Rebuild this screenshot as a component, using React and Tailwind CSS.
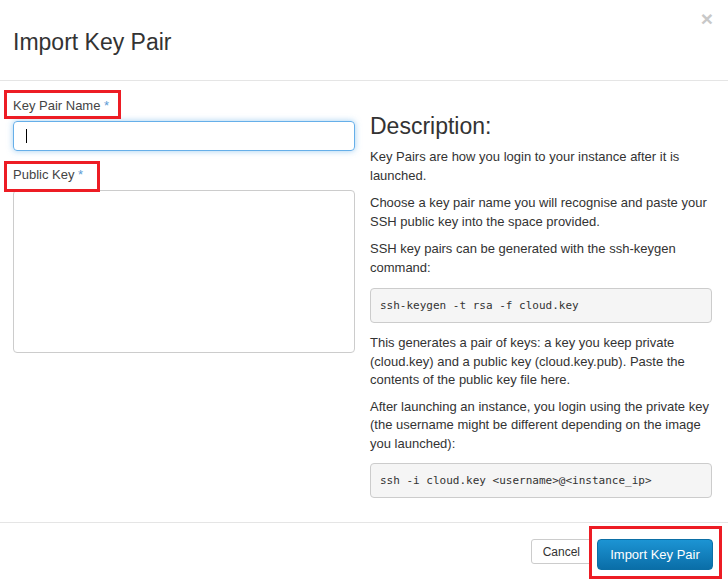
export default function App() {
  return (
    <div className="relative w-[728px] h-[579px] bg-white flex flex-col font-['Liberation_Sans',Arial,sans-serif] text-[#333] overflow-hidden">
      {/* header */}
      <div className="h-[81px] border-b border-[#e5e5e5] flex justify-between pl-[13px] pr-[15px]">
        <h3 className="mt-[29px] text-[23px] leading-[26px] font-normal text-[#333]">Import Key Pair</h3>
        <span className="mt-[6px] text-[21px] leading-[26px] font-bold text-[#c8c8c8]">×</span>
      </div>

      {/* body */}
      <div className="flex-1 flex px-[13px] pt-[15px]">
        <div className="w-[342px] flex flex-col">
          <label className="text-[13px] leading-[19px] text-[#444] mb-[6px]">
            Key Pair Name <span className="text-[#5b9bd5]">*</span>
          </label>
          <div className="h-[30px] rounded-[4px] border border-[#66afe9] shadow-[0_0_6px_rgba(102,175,233,0.6)] flex items-center pl-[12px]">
            <div className="w-px h-[14px] bg-black" />
          </div>
          <label className="mt-[14px] text-[13px] leading-[19px] text-[#444] mb-[6px]">
            Public Key <span className="text-[#5b9bd5]">*</span>
          </label>
          <div className="h-[163px] rounded-[4px] border border-[#ccc]" />
        </div>

        <div className="w-[342px] ml-[15px] text-[13px] leading-[19px] text-[#333]">
          <h3 className="mt-[17px] mb-[8px] text-[23px] leading-[26px] font-normal">Description:</h3>
          <p className="mb-[8px]">Key Pairs are how you login to your instance after it is launched.</p>
          <p className="mb-[8px]">Choose a key pair name you will recognise and paste your SSH public key into the space provided.</p>
          <p className="mb-[11px]">SSH key pairs can be generated with the ssh-keygen command:</p>
          <pre className="mb-[11px] bg-[#f5f5f5] border border-[#ccc] rounded-[4px] pl-[9px] py-[8px] font-['DejaVu_Sans_Mono',monospace] text-[11px] leading-[17px] text-[#333]">ssh-keygen -t rsa -f cloud.key</pre>
          <p className="mb-[8px] leading-[18.5px]">This generates a pair of keys: a key you keep private (cloud.key) and a public key (cloud.key.pub). Paste the contents of the public key file here.</p>
          <p className="mb-[10px] leading-[18.5px]">After launching an instance, you login using the private key (the username might be different depending on the image you launched):</p>
          <pre className="bg-[#f5f5f5] border border-[#ccc] rounded-[4px] pl-[9px] py-[8px] font-['DejaVu_Sans_Mono',monospace] text-[11px] leading-[17px] text-[#333]">ssh -i cloud.key &lt;username&gt;@&lt;instance_ip&gt;</pre>
        </div>
      </div>

      {/* footer */}
      <div className="h-[57px] border-t border-[#e5e5e5] flex justify-end items-start gap-[5px] pt-[16px] pr-[15px]">
        <button className="h-[25px] px-[11px] rounded-[3px] border border-[#ccc] bg-white text-[12px] text-[#333]">Cancel</button>
        <button className="h-[31px] w-[116px] rounded-[4px] border border-[#0b6fa6] bg-gradient-to-b from-[#1c94d3] to-[#0a6ea8] text-[13px] text-white">Import Key Pair</button>
      </div>

      {/* red annotation boxes */}
      <div className="absolute left-[4px] top-[90px] w-[117px] h-[29px] border-[3px] border-[#ed1c24]" />
      <div className="absolute left-[4px] top-[161px] w-[96px] h-[31px] border-[3px] border-[#ed1c24]" />
      <div className="absolute left-[589px] top-[526px] w-[133px] h-[53px] border-[3px] border-[#ed1c24]" />
    </div>
  )
}
